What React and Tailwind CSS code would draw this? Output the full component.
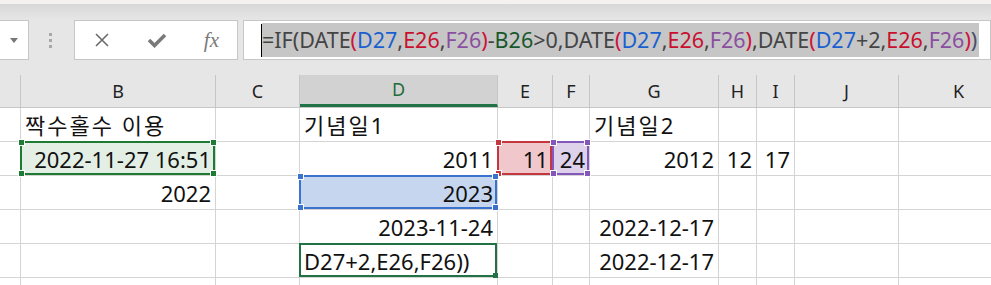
import React from "react";

const cols = ["", "B", "C", "D", "E", "F", "G", "H", "I", "J", "K"];
const gridCols =
  "grid grid-cols-[21px_195px_84px_198px_55px_37px_129px_38px_38px_104px_120px]";

const formula = [
  ["=IF(DATE", "text-[#444]"],
  ["(", "text-[#d0103a]"],
  ["D27", "text-[#1a5fd0]"],
  [",", "text-[#444]"],
  ["E26", "text-[#c8102e]"],
  [",", "text-[#444]"],
  ["F26", "text-[#8b4f9f]"],
  [")", "text-[#d0103a]"],
  ["-", "text-[#444]"],
  ["B26", "text-[#17582a]"],
  [">0,DATE", "text-[#444]"],
  ["(", "text-[#d0103a]"],
  ["D27", "text-[#1a5fd0]"],
  [",", "text-[#444]"],
  ["E26", "text-[#c8102e]"],
  [",", "text-[#444]"],
  ["F26", "text-[#8b4f9f]"],
  [")", "text-[#d0103a]"],
  [",DATE", "text-[#444]"],
  ["(", "text-[#d0103a]"],
  ["D27", "text-[#1a5fd0]"],
  ["+2,", "text-[#444]"],
  ["E26", "text-[#c8102e]"],
  [",", "text-[#444]"],
  ["F26", "text-[#8b4f9f]"],
  [")", "text-[#d0103a]"],
  [")", "text-[#4a4f6a]"],
];

// row data: [col index] -> [text, align, frame, korean]
const rows = [
  { 1: ["짝수홀수 이용", "l", null, true], 3: ["기념일1", "l", null, true], 6: ["기념일2", "l", null, true] },
  { 1: ["2022-11-27 16:51", "r", "green"], 3: ["2011", "r"], 4: ["11", "r", "red"], 5: ["24", "r", "purple"], 6: ["2012", "r"], 7: ["12", "r"], 8: ["17", "r"] },
  { 1: ["2022", "r"], 3: ["2023", "r", "blue"] },
  { 3: ["2023-11-24", "r"], 6: ["2022-12-17", "r"] },
  { 3: ["D27+2,E26,F26))", "l", "edit"], 6: ["2022-12-17", "r"] },
  {},
];

const fills = {
  green: "bg-[#e3efe5]",
  red: "bg-[#f0c8cb]",
  purple: "bg-[#ddd2ea]",
  blue: "bg-[#c6d6ef]",
  edit: "bg-white",
};

const Handle = ({ pos, color }) => (
  <span className={`absolute w-[7px] h-[7px] border border-white ${color} ${pos}`} />
);

const Frame = ({ kind }) => {
  if (kind === "green")
    return (
      <div className="absolute -left-px -top-px right-0 bottom-0 border-2 border-[#1e7b34] pointer-events-none">
        <Handle pos="-left-[4px] -top-[4px]" color="bg-[#1e7b34]" />
        <Handle pos="-right-[4px] -top-[4px]" color="bg-[#1e7b34]" />
        <Handle pos="-left-[4px] -bottom-[4px]" color="bg-[#1e7b34]" />
        <Handle pos="-right-[4px] -bottom-[4px]" color="bg-[#1e7b34]" />
      </div>
    );
  if (kind === "blue")
    return (
      <div className="absolute -left-px -top-px right-0 bottom-0 border-2 border-[#3a72d0] pointer-events-none">
        <Handle pos="-left-[4px] -top-[4px]" color="bg-[#3a72d0]" />
        <Handle pos="-right-[4px] -top-[4px]" color="bg-[#3a72d0]" />
        <Handle pos="-left-[4px] -bottom-[4px]" color="bg-[#3a72d0]" />
        <Handle pos="-right-[4px] -bottom-[4px]" color="bg-[#3a72d0]" />
      </div>
    );
  if (kind === "red")
    return (
      <div className="absolute -left-px -top-px right-0 bottom-0 border-2 border-[#c4373f] pointer-events-none">
        <Handle pos="-left-[4px] -top-[4px]" color="bg-[#c4373f]" />
        <Handle pos="-left-[4px] -bottom-[4px]" color="bg-[#c4373f]" />
      </div>
    );
  if (kind === "purple")
    return (
      <div className="absolute -left-px -top-px right-0 bottom-0 border-2 border-[#8457bd] pointer-events-none">
        <Handle pos="-left-[4px] -top-[4px]" color="bg-[#8457bd]" />
        <Handle pos="-right-[4px] -top-[4px]" color="bg-[#8457bd]" />
        <Handle pos="-left-[4px] -bottom-[4px]" color="bg-[#8457bd]" />
        <Handle pos="-right-[4px] -bottom-[4px]" color="bg-[#8457bd]" />
      </div>
    );
  if (kind === "edit")
    return (
      <div className="absolute -left-px -top-px right-0 bottom-0 border-2 border-[#217346] pointer-events-none">
        <span className="absolute -right-[3px] -bottom-[3px] w-[5px] h-[5px] bg-[#217346]" />
      </div>
    );
  return null;
};

export default function App() {
  return (
    <div
      className="w-[991px] h-[285px] overflow-hidden bg-[#e6e6e6] text-[#111]"
      style={{ fontFamily: '"Noto Sans", "Noto Sans CJK KR", sans-serif' }}
    >
      <div className="h-[4px] bg-[#f3f2f1]" />
      <div className="h-[16px] bg-gradient-to-b from-[#d8d8d8] to-[#e6e6e6]" />

      {/* Formula bar */}
      <div className="flex h-[40px]">
        <div className="w-[29px] bg-white border-y border-r border-[#c6c6c6] flex items-center justify-end pr-[10px]">
          <span className="w-0 h-0 border-x-[4px] border-x-transparent border-t-[5px] border-t-[#777]" />
        </div>
        <div className="w-[45px] flex flex-col items-center justify-center gap-[3px] pr-[2px]">
          <span className="w-[3px] h-[3px] bg-[#a8a8a8]" />
          <span className="w-[3px] h-[3px] bg-[#a8a8a8]" />
          <span className="w-[3px] h-[3px] bg-[#a8a8a8]" />
        </div>
        <div className="w-[164px] bg-white border border-[#c6c6c6] flex items-center justify-between pl-[19px] pr-[18px]">
          <svg width="16" height="16" viewBox="0 0 16 16">
            <path d="M2 2 L14 14 M14 2 L2 14" stroke="#6a6a6a" strokeWidth="1.6" fill="none" />
          </svg>
          <svg width="20" height="16" viewBox="0 0 20 16">
            <path d="M2 8 L7.5 13.5 L18 3" stroke="#7a7a7a" strokeWidth="3.6" fill="none" strokeLinejoin="miter" />
          </svg>
          <span
            className="text-[#7a7a7a] italic text-[21px] leading-none"
            style={{ fontFamily: '"Liberation Serif", serif' }}
          >
            fx
          </span>
        </div>
        <div className="ml-[5px] flex-1 bg-white border border-[#c6c6c6] flex items-center pl-[17px]">
          <span className="w-px h-[33px] bg-black" />
          <div className="bg-[#c6c6c6] h-[34px] flex items-center pr-[2px] text-[21.5px] whitespace-nowrap">
            {formula.map(([t, c], i) => (
              <span key={i} className={c}>
                {t}
              </span>
            ))}
          </div>
        </div>
      </div>

      <div className="h-[15px]" />

      {/* Column headers */}
      <div className={`${gridCols} h-[33px] border-b border-[#c6c6c6]`}>
        {cols.map((c, i) => (
          <div
            key={i}
            className={`flex items-center justify-center text-[18px] border-r border-[#c6c6c6] ${
              c === "D"
                ? "bg-[#d2d2d2] text-[#1e6b3c] border-b-[3px] border-b-[#217346]"
                : "text-[#222]"
            }`}
          >
            {c}
          </div>
        ))}
      </div>

      {/* Cells */}
      <div className="bg-white">
        {rows.map((r, ri) => (
          <div key={ri} className={`${gridCols} h-[34px]`}>
            {cols.map((_, ci) => {
              const cell = r[ci];
              const kind = cell && cell[2];
              return (
                <div
                  key={ci}
                  className={`relative flex items-end pb-[1px] text-[22px] leading-[30px] border-r border-b border-[#d4d4d4] ${
                    kind ? fills[kind] : ""
                  } ${cell && cell[1] === "r" ? "justify-end pr-[4px]" : "justify-start pl-[4px]"} ${
                    kind === "red" || kind === "purple" || kind === "blue" || kind === "green" ? "z-10" : ""
                  }`}
                >
                  {cell && (
                    <span className={`whitespace-nowrap ${cell[3] ? "tracking-[2px]" : ""}`}>{cell[0]}</span>
                  )}
                  {kind && <Frame kind={kind} />}
                </div>
              );
            })}
          </div>
        ))}
      </div>
    </div>
  );
}
